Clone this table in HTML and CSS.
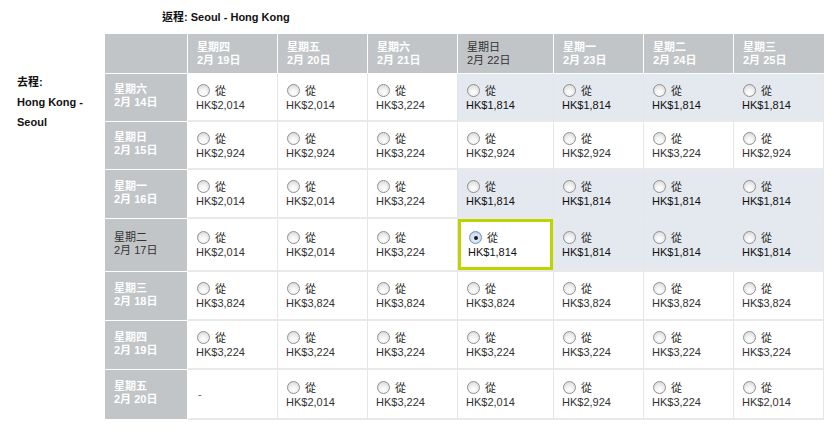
FILE: index.html
```html
<!DOCTYPE html>
<html lang="zh-Hant">
<head>
<meta charset="utf-8">
<link rel="stylesheet" href="styles.css">
</head>
<body>
<div class="page">
  <div class="outbound">
    <div>去程:</div>
    <div>Hong Kong -</div>
    <div>Seoul</div>
  </div>
  <div class="main">
    <div class="title">返程: Seoul - Hong Kong</div>
    <table class="grid">
      <colgroup>
        <col class="c-head"><col class="c-std"><col class="c-std"><col class="c-std"><col class="c-wide"><col class="c-std"><col class="c-std"><col class="c-std">
      </colgroup>
      <thead>
        <tr>
          <th class="corner"></th>
          <th class="colh">星期四<br>2月 19日</th>
          <th class="colh">星期五<br>2月 20日</th>
          <th class="colh">星期六<br>2月 21日</th>
          <th class="colh active">星期日<br>2月 22日</th>
          <th class="colh">星期一<br>2月 23日</th>
          <th class="colh">星期二<br>2月 24日</th>
          <th class="colh">星期三<br>2月 25日</th>
        </tr>
      </thead>
      <tbody>
        <tr class="r-first">
          <th class="rowh">星期六<br>2月 14日</th>
          <td><span class="opt"><span class="radio"></span>從</span><span class="price">HK$2,014</span></td>
          <td><span class="opt"><span class="radio"></span>從</span><span class="price">HK$2,014</span></td>
          <td><span class="opt"><span class="radio"></span>從</span><span class="price">HK$3,224</span></td>
          <td class="hl"><span class="opt"><span class="radio"></span>從</span><span class="price">HK$1,814</span></td>
          <td class="hl"><span class="opt"><span class="radio"></span>從</span><span class="price">HK$1,814</span></td>
          <td class="hl"><span class="opt"><span class="radio"></span>從</span><span class="price">HK$1,814</span></td>
          <td class="hl"><span class="opt"><span class="radio"></span>從</span><span class="price">HK$1,814</span></td>
        </tr>
        <tr class="r-second">
          <th class="rowh">星期日<br>2月 15日</th>
          <td><span class="opt"><span class="radio"></span>從</span><span class="price">HK$2,924</span></td>
          <td><span class="opt"><span class="radio"></span>從</span><span class="price">HK$2,924</span></td>
          <td><span class="opt"><span class="radio"></span>從</span><span class="price">HK$3,224</span></td>
          <td><span class="opt"><span class="radio"></span>從</span><span class="price">HK$2,924</span></td>
          <td><span class="opt"><span class="radio"></span>從</span><span class="price">HK$2,924</span></td>
          <td><span class="opt"><span class="radio"></span>從</span><span class="price">HK$3,224</span></td>
          <td><span class="opt"><span class="radio"></span>從</span><span class="price">HK$2,924</span></td>
        </tr>
        <tr>
          <th class="rowh">星期一<br>2月 16日</th>
          <td><span class="opt"><span class="radio"></span>從</span><span class="price">HK$2,014</span></td>
          <td><span class="opt"><span class="radio"></span>從</span><span class="price">HK$2,014</span></td>
          <td><span class="opt"><span class="radio"></span>從</span><span class="price">HK$3,224</span></td>
          <td class="hl"><span class="opt"><span class="radio"></span>從</span><span class="price">HK$1,814</span></td>
          <td class="hl"><span class="opt"><span class="radio"></span>從</span><span class="price">HK$1,814</span></td>
          <td class="hl"><span class="opt"><span class="radio"></span>從</span><span class="price">HK$1,814</span></td>
          <td class="hl"><span class="opt"><span class="radio"></span>從</span><span class="price">HK$1,814</span></td>
        </tr>
        <tr class="r-sel">
          <th class="rowh active">星期二<br>2月 17日</th>
          <td><span class="opt"><span class="radio"></span>從</span><span class="price">HK$2,014</span></td>
          <td><span class="opt"><span class="radio"></span>從</span><span class="price">HK$2,014</span></td>
          <td><span class="opt"><span class="radio"></span>從</span><span class="price">HK$3,224</span></td>
          <td class="sel"><span class="opt"><span class="radio on"></span>從</span><span class="price">HK$1,814</span></td>
          <td class="hl"><span class="opt"><span class="radio"></span>從</span><span class="price">HK$1,814</span></td>
          <td class="hl"><span class="opt"><span class="radio"></span>從</span><span class="price">HK$1,814</span></td>
          <td class="hl"><span class="opt"><span class="radio"></span>從</span><span class="price">HK$1,814</span></td>
        </tr>
        <tr>
          <th class="rowh">星期三<br>2月 18日</th>
          <td><span class="opt"><span class="radio"></span>從</span><span class="price">HK$3,824</span></td>
          <td><span class="opt"><span class="radio"></span>從</span><span class="price">HK$3,824</span></td>
          <td><span class="opt"><span class="radio"></span>從</span><span class="price">HK$3,824</span></td>
          <td><span class="opt"><span class="radio"></span>從</span><span class="price">HK$3,824</span></td>
          <td><span class="opt"><span class="radio"></span>從</span><span class="price">HK$3,824</span></td>
          <td><span class="opt"><span class="radio"></span>從</span><span class="price">HK$3,824</span></td>
          <td><span class="opt"><span class="radio"></span>從</span><span class="price">HK$3,824</span></td>
        </tr>
        <tr>
          <th class="rowh">星期四<br>2月 19日</th>
          <td><span class="opt"><span class="radio"></span>從</span><span class="price">HK$3,224</span></td>
          <td><span class="opt"><span class="radio"></span>從</span><span class="price">HK$3,224</span></td>
          <td><span class="opt"><span class="radio"></span>從</span><span class="price">HK$3,224</span></td>
          <td><span class="opt"><span class="radio"></span>從</span><span class="price">HK$3,224</span></td>
          <td><span class="opt"><span class="radio"></span>從</span><span class="price">HK$3,224</span></td>
          <td><span class="opt"><span class="radio"></span>從</span><span class="price">HK$3,224</span></td>
          <td><span class="opt"><span class="radio"></span>從</span><span class="price">HK$3,224</span></td>
        </tr>
        <tr class="r-last">
          <th class="rowh">星期五<br>2月 20日</th>
          <td><span class="dash">-</span></td>
          <td><span class="opt"><span class="radio"></span>從</span><span class="price">HK$2,014</span></td>
          <td><span class="opt"><span class="radio"></span>從</span><span class="price">HK$3,224</span></td>
          <td><span class="opt"><span class="radio"></span>從</span><span class="price">HK$2,014</span></td>
          <td><span class="opt"><span class="radio"></span>從</span><span class="price">HK$2,924</span></td>
          <td><span class="opt"><span class="radio"></span>從</span><span class="price">HK$3,224</span></td>
          <td><span class="opt"><span class="radio"></span>從</span><span class="price">HK$2,014</span></td>
        </tr>
      </tbody>
    </table>
  </div>
</div>
</body>
</html>
```

FILE: styles.css
```css
* { box-sizing: border-box; }

body {
  margin: 0;
  background: #fff;
  font-family: "Liberation Sans", Arial, "Noto Sans CJK TC", sans-serif;
  font-size: 11px;
  color: #333;
}

.page {
  display: flex;
  align-items: flex-start;
}

.outbound {
  width: 105px;
  padding: 72px 0 0 17px;
  font-weight: bold;
  line-height: 20px;
  color: #111;
}

.main {
  display: flex;
  flex-direction: column;
}

.title {
  padding: 10px 0 0 57px;
  height: 34px;
  line-height: 14px;
  font-weight: bold;
  color: #111;
}

.grid {
  border-collapse: separate;
  border-spacing: 0;
  table-layout: fixed;
  width: 719px;
}

.c-head { width: 83px; }
.c-std { width: 90px; }
.c-wide { width: 96px; }

.grid th {
  background: #c1c5c8;
  color: #fff;
  font-weight: bold;
  text-align: left;
  line-height: 13px;
  border-right: 1px solid #fff;
  border-bottom: 1px solid #fff;
  vertical-align: middle;
}

.grid .colh {
  height: 40px;
  padding: 0 0 0 9px;
}

.grid .colh:last-child { border-right: none; }

.grid .rowh {
  padding: 0 0 3px 9px;
}

.grid th.active {
  color: #333;
  font-weight: normal;
}

.grid tbody tr { height: 49px; }
.grid tbody tr.r-first { height: 48px; }
.grid tbody tr.r-second { height: 48px; }
.grid tbody tr.r-sel { height: 53px; }
.grid tbody tr.r-last { height: 50px; }

.grid td {
  background: #fff;
  border-right: 1px solid #e6e6e6;
  border-bottom: 2px solid #e9e9e9;
  padding: 1px 0 0 8px;
  vertical-align: middle;
  line-height: 15px;
}

.grid td.hl { background: #e4e9ef; }

.grid td.sel {
  background: #fff;
  box-shadow: inset 0 0 0 3px #bfd300;
  padding-left: 10px;
}

.opt {
  display: flex;
  align-items: center;
  gap: 5px;
  font-family: "Noto Sans CJK TC", sans-serif;
  font-size: 11px;
  color: #222;
  padding-left: 1px;
}

.price {
  display: block;
  color: #333;
  font-size: 11px;
}

.hl .price, .sel .price { color: #111; }

.radio {
  width: 13px;
  height: 13px;
  border-radius: 50%;
  border: 1px solid #8f8f8f;
  background: radial-gradient(circle at 50% 70%, #fff 0, #f4f4f4 35%, #d2d2d2 100%);
  display: inline-flex;
  align-items: center;
  justify-content: center;
}

.radio.on {
  border-color: #6d8fc2;
  background: radial-gradient(circle at 50% 60%, #eef4fd 0, #cfdcf0 60%, #9fb7dd 100%);
}

.radio.on::after {
  content: "";
  width: 4px;
  height: 4px;
  border-radius: 50%;
  background: #1a1a1a;
}

.dash {
  display: block;
  padding-left: 2px;
  color: #555;
}
```
